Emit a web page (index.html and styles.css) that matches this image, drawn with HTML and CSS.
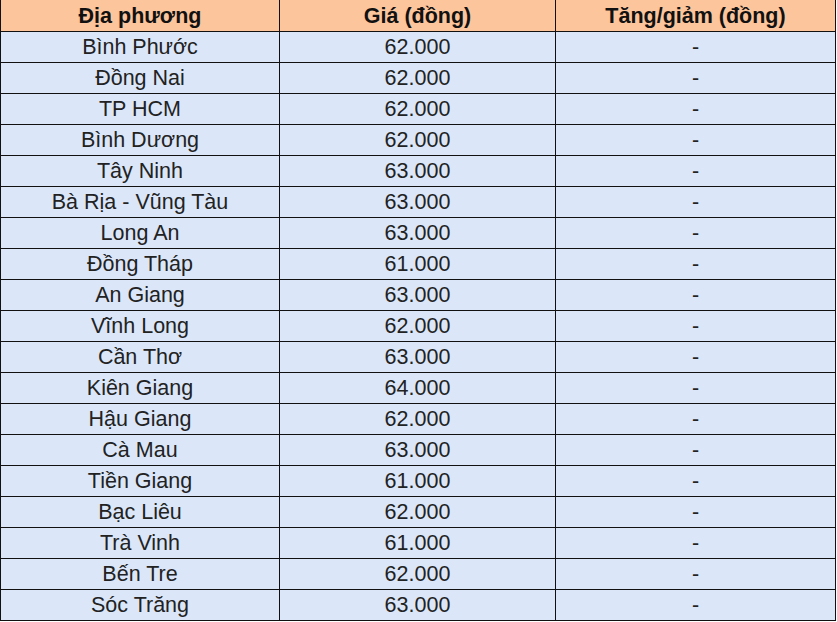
FILE: index.html
```html
<!DOCTYPE html>
<html lang="vi">
<head>
<meta charset="utf-8">
<title>Giá</title>
<link rel="stylesheet" href="styles.css">
</head>
<body>
<table class="price-table">
  <thead>
    <tr class="head-row">
      <th class="c1">Địa phương</th>
      <th class="c2">Giá (đồng)</th>
      <th class="c3">Tăng/giảm (đồng)</th>
    </tr>
  </thead>
  <tbody>
    <tr><td class="c1">Bình Phước</td><td class="c2">62.000</td><td class="c3">-</td></tr>
    <tr><td class="c1">Đồng Nai</td><td class="c2">62.000</td><td class="c3">-</td></tr>
    <tr><td class="c1">TP HCM</td><td class="c2">62.000</td><td class="c3">-</td></tr>
    <tr><td class="c1">Bình Dương</td><td class="c2">62.000</td><td class="c3">-</td></tr>
    <tr><td class="c1">Tây Ninh</td><td class="c2">63.000</td><td class="c3">-</td></tr>
    <tr><td class="c1">Bà Rịa - Vũng Tàu</td><td class="c2">63.000</td><td class="c3">-</td></tr>
    <tr><td class="c1">Long An</td><td class="c2">63.000</td><td class="c3">-</td></tr>
    <tr><td class="c1">Đồng Tháp</td><td class="c2">61.000</td><td class="c3">-</td></tr>
    <tr><td class="c1">An Giang</td><td class="c2">63.000</td><td class="c3">-</td></tr>
    <tr><td class="c1">Vĩnh Long</td><td class="c2">62.000</td><td class="c3">-</td></tr>
    <tr><td class="c1">Cần Thơ</td><td class="c2">63.000</td><td class="c3">-</td></tr>
    <tr><td class="c1">Kiên Giang</td><td class="c2">64.000</td><td class="c3">-</td></tr>
    <tr><td class="c1">Hậu Giang</td><td class="c2">62.000</td><td class="c3">-</td></tr>
    <tr><td class="c1">Cà Mau</td><td class="c2">63.000</td><td class="c3">-</td></tr>
    <tr><td class="c1">Tiền Giang</td><td class="c2">61.000</td><td class="c3">-</td></tr>
    <tr><td class="c1">Bạc Liêu</td><td class="c2">62.000</td><td class="c3">-</td></tr>
    <tr><td class="c1">Trà Vinh</td><td class="c2">61.000</td><td class="c3">-</td></tr>
    <tr><td class="c1">Bến Tre</td><td class="c2">62.000</td><td class="c3">-</td></tr>
    <tr><td class="c1">Sóc Trăng</td><td class="c2">63.000</td><td class="c3">-</td></tr>
  </tbody>
</table>
</body>
</html>
```
FILE: styles.css
```css
html, body {
  margin: 0;
  padding: 0;
  background: #ffffff;
}

.price-table {
  border-collapse: separate;
  border-spacing: 0;
  table-layout: fixed;
  width: 836px;
  font-family: "Liberation Sans", Arial, sans-serif;
  font-size: 21.5px;
  color: #222222;
}

.price-table th,
.price-table td {
  padding: 0;
  text-align: center;
  vertical-align: middle;
  border-right: 1px solid #111111;
  border-bottom: 1px solid #111111;
  box-sizing: content-box;
  white-space: nowrap;
  overflow: hidden;
}

.price-table .c1 {
  border-left: 1px solid #111111;
  width: 278px;
}

.price-table .c2 {
  width: 275px;
}

.price-table .c3 {
  width: 279px;
}

.price-table th {
  padding-top: 2px;
  height: 29px;
  line-height: 29px;
  background: #fdc59c;
  font-weight: bold;
  color: #111111;
}

.price-table td {
  padding-top: 1px;
  height: 29px;
  line-height: 29px;
  background: #dbe7f9;
}
```
